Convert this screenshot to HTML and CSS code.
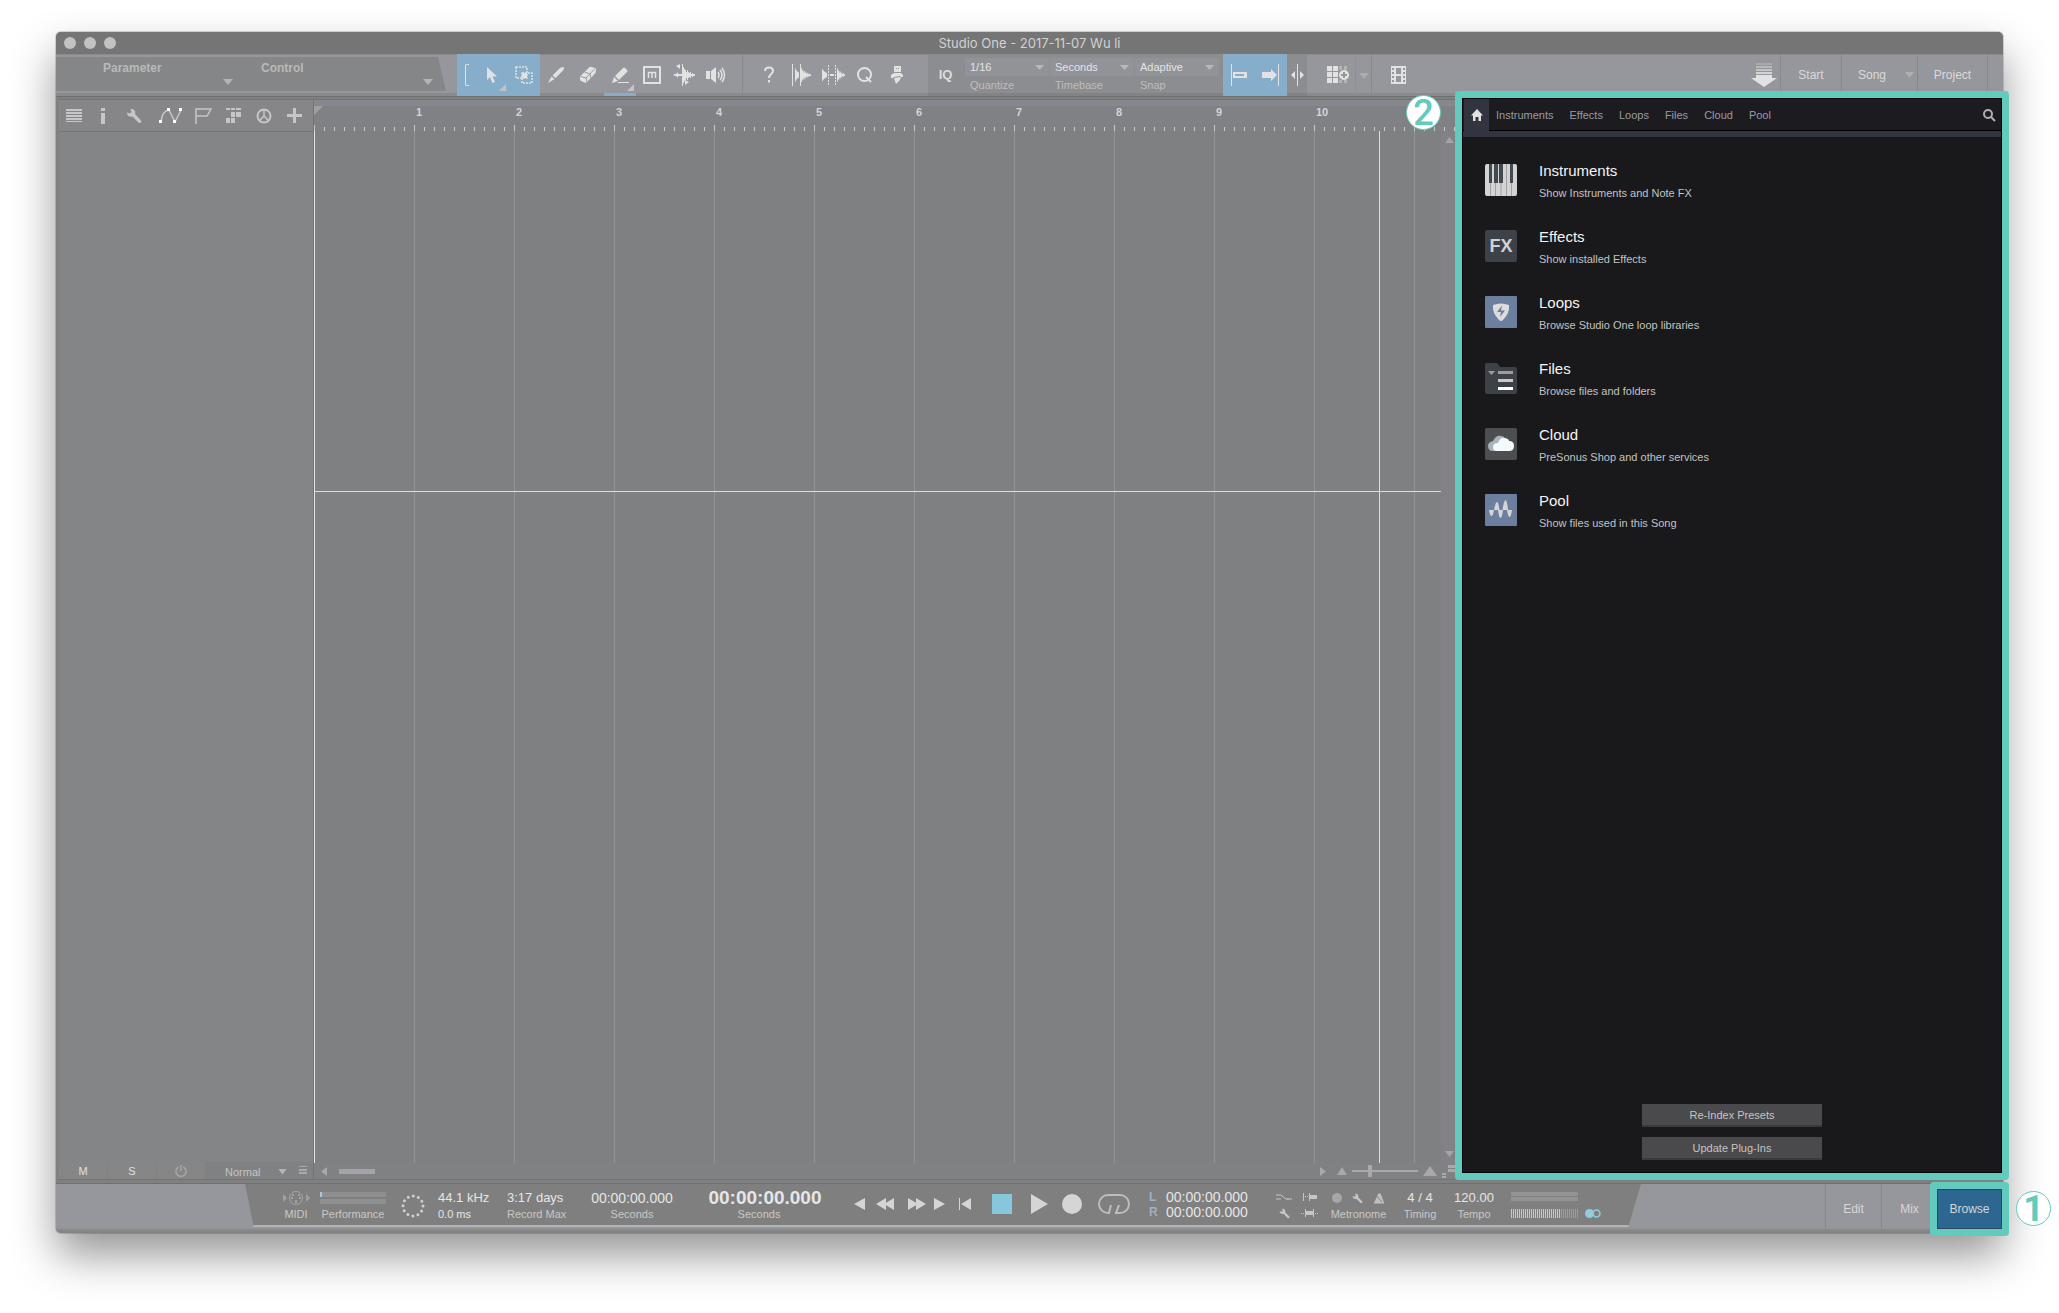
FILE: index.html
```html
<!DOCTYPE html>
<html lang="en">
<head>
<meta charset="utf-8">
<title>Studio One - 2017-11-07 Wu li</title>
<link rel="stylesheet" href="styles.css">
</head>
<body>
<svg class="defs" aria-hidden="true">
  <symbol id="wrench" viewBox="0 0 16 16"><path d="M1 4.500 4 5.500 5.500 4 4.500 1C8 .5 10 3 9 6l6 6.500c1 1.500-1 3.200-2.400 2.200L6.500 8.500C4 9.500.8 8 1 4.500z"/></symbol>
  <symbol id="wave" viewBox="0 0 12 16" preserveAspectRatio="none"><path d="M0 0h1v2h1v1h1v2h1V3h1v2h1v1h1V5h1v2h1V6h1v1h2v2h-2v1H9V9H8v2H7v-1H6v1H5v2H4v-2H3v2H2v1H1v2H0z"/></symbol>
</svg>
<div class="window">
  <header class="titlebar">
    <div class="lights"><i></i><i></i><i></i></div>
    <h1>Studio One - 2017-11-07 Wu li</h1>
  </header>

  <div class="toolbar">
    <div class="mapping">
      <div class="map-cell parameter"><b>Parameter</b><i class="caret"></i></div>
      <div class="map-cell"><b>Control</b><i class="caret"></i></div>
    </div>
    <div class="tools">
      <div class="lit">
        <span class="bracket"></span>
        <button class="tool arrow" aria-label="Arrow"><svg width="12" height="18" viewBox="0 0 12 18"><path d="M1 1v13l3-3 2.500 6 2.500-1-2.500-5.500H11z"/></svg><i class="corner"></i></button>
        <button class="tool" aria-label="Range"><svg class="line" width="18" height="18" viewBox="0 0 18 18"><path d="M1 1h11v11H1zM7 7h10v10H7z" stroke-width="1.500" stroke-dasharray="2 1"/><path d="M7.500 7.500h4v4h-4z" fill="#e2e2e2"/></svg></button>
      </div>
      <button class="tool" aria-label="Split"><svg width="18" height="18" viewBox="0 0 18 18"><path d="M1 17 4.500 10.500 7.500 13zM5.500 9.500 13 2q2-1 4-1 0 2-1 3.500L8.500 12z"/></svg></button>
      <button class="tool" aria-label="Eraser"><svg width="18" height="18" viewBox="0 0 18 18"><path d="M1 10.500 10 1.500q1-1 2.500-.5l3.500 1q1.500.5 1 2l-.5 3L8 16q-1 1-2.500.5L2 15q-1-.5-1-2z"/><path d="m1.500 10.500 5.500 1.500 1 4M7 12l9-9.500M5.500 6l5.500 2 1 4" fill="none" stroke="#98999d"/></svg></button>
      <button class="tool active" aria-label="Paint"><svg width="18" height="18" viewBox="0 0 18 18"><path d="M1 17 3 11l4 4zM4 10 12 2q1-1 2 0l2 2q1 1 0 2l-8 8zM7 16h11v1H7z"/></svg><i class="corner"></i></button>
      <button class="tool" aria-label="Mute"><svg class="line" width="18" height="18" viewBox="0 0 18 18"><path d="M1 1h16v16H1z" stroke-width="2"/><path d="M5.500 12V6.500h7V12M9 6.500V12" stroke-width="1.500"/></svg></button>
      <button class="tool" aria-label="Bend"><svg width="22" height="24" viewBox="0 0 22 24"><path d="M9 1h1v22H9zM0 12q1-1 3-1l2-2v2h4v2H5v2l-2-2q-2 0-3-1zM3 3l4-2v5zM12 22v-5l4 2z"/><use href="#wave" x="10" y="4" width="12" height="16"/></svg></button>
      <button class="tool" aria-label="Listen"><svg width="20" height="18" viewBox="0 0 20 18"><path d="M0 5h4v8H0zM5 5l5-4v16l-5-4z"/><path d="M12 6q2 3 0 6M14 4q4 5 0 10M16 2q5 7 0 14" fill="none" stroke="#e2e2e2" stroke-width="1.500"/></svg></button>
    </div>
    <div class="actions">
      <button class="tool" aria-label="Help"><svg class="line" width="12" height="18" viewBox="0 0 12 18"><path d="M2 5q0-3.500 4-3.500T10 5c0 3-4 3-4 7M6 14v2.500" stroke-width="2"/></svg></button>
      <button class="tool" aria-label="Transient"><svg width="19" height="24" viewBox="0 0 19 24"><path d="M0 1h1v22H0zM8 1h1v22H8zM3 4l1 3 1 1 2 2v4l-2 2-1 1-1 3z"/><use href="#wave" x="9" y="5" width="10" height="14"/></svg></button>
      <button class="tool" aria-label="Audio bend"><svg width="24" height="22" viewBox="0 0 24 22"><path d="M1 4l1 2 2 2 2 1v4l-2 1-2 2-1 2z"/><use href="#wave" x="16" y="4" width="8" height="14"/><path d="M7.500 1v20M14.500 1v20" stroke="#e2e2e2" stroke-dasharray="2 1"/><path d="M9 10h4v2H9z"/></svg></button>
      <button class="tool" aria-label="Quantize"><svg class="line" width="18" height="18" viewBox="0 0 18 18"><circle cx="8.500" cy="8.500" r="6.500" stroke-width="2"/><path d="m10 11 5 5" stroke-width="2"/></svg></button>
      <button class="tool" aria-label="Macro"><svg width="14" height="18" viewBox="0 0 14 18"><path fill-rule="evenodd" d="M4 0h7v6H4zM6 2v1h1V2zm2 0v1h1V2zM4 7h7l2 2v2h-2l-1-1-6 1-1 1H1V9zM4 12l7-1-1 3-4 4z"/></svg></button>
    </div>
    <div class="snap">
      <button class="iq">IQ</button>
      <div class="pick"><select id="quantize" aria-label="Quantize"><option>1/16</option></select><label for="quantize">Quantize</label></div>
      <div class="pick"><select id="timebase" aria-label="Timebase"><option>Seconds</option></select><label for="timebase">Timebase</label></div>
      <div class="pick"><select id="snapmode" aria-label="Snap"><option>Adaptive</option></select><label for="snapmode">Snap</label></div>
      <div class="lit">
        <button class="tool" aria-label="Snap to events"><svg width="18" height="24" viewBox="0 0 18 24"><path fill-rule="evenodd" d="M1 1h1v22H1zM3 9h14v6H3zM5 11v2h9v-2z"/></svg></button>
        <button class="tool" aria-label="Autoscroll"><svg width="18" height="24" viewBox="0 0 18 24"><path d="M16 1h1v22h-1zM0 9h9V6l6 6-6 6v-3H0z"/></svg></button>
      </div>
      <button class="tool slim" aria-label="Cursor snap"><svg width="13" height="24" viewBox="0 0 13 24"><path d="M6 1h1v22H6zM0 12l4-4v8zM13 12 9 8v8z"/></svg></button>
    </div>
    <button class="tool wide" aria-label="Add pattern"><svg width="24" height="18" viewBox="0 0 24 18"><path d="M0 0h5v5H0zM6 0h5v5H6zM0 6h5v5H0zM6 6h5v5H6zM0 12h5v5H0zM6 12h5v5H6z"/><path d="M12 0h3v4h-3zM17 0h3v4h-3zM12 14h3v3h-3zM17 14h3v3h-3z" opacity=".4"/><path fill-rule="evenodd" d="M17 4a5 5 0 1 0 .1 0zm-1 2h2v2h2v2h-2v2h-2v-2h-2V8h2z"/></svg></button>
    <button class="drop" aria-label="Pattern options"><i class="caret"></i></button>
    <button class="tool film" aria-label="Video"><svg width="15" height="18" viewBox="0 0 15 18"><path fill-rule="evenodd" d="M0 0h15v18H0zM1 2v2h2V2zm0 4v2h2V6zm0 4v2h2v-2zm0 4v2h2v-2zM12 2v2h2V2zm0 4v2h2V6zm0 4v2h2v-2zm0 4v2h2v-2zM5 2v6h5V2zm0 8v6h5v-6z"/></svg></button>
    <nav class="pages">
      <span class="download"><svg width="26" height="24" viewBox="0 0 26 24"><path d="M5 12h16v3h5L13 24 0 15h5z"/><path d="M5 9h16v2H5z" opacity=".8"/><path d="M5 6h16v2H5z" opacity=".6"/><path d="M5 3h16v2H5z" opacity=".45"/><path d="M5 0h16v2H5z" opacity=".25"/></svg></span>
      <button>Start</button>
      <button>Song</button>
      <button class="song-drop" aria-label="Songs"><i class="caret"></i></button>
      <button class="project">Project</button>
      <span></span>
    </nav>
  </div>

  <main>
    <section class="tracks">
      <div class="track-tools">
        <button aria-label="Track list"><svg width="16" height="13"><path d="M0 0h16v2H0zM0 3h16v2H0zM0 6h16v2H0zM0 9h16v2H0zM0 12h16v1H0z"/></svg></button>
        <button aria-label="Inspector"><svg width="4" height="16"><path d="M0 0h4v3H0zM0 5h4v11H0z"/></svg></button>
        <button aria-label="Options"><svg width="16" height="16"><use href="#wrench"/></svg></button>
        <button aria-label="Automation"><svg width="24" height="16" viewBox="0 0 24 16"><path d="M2 14Q3 3 10 2l6 12 6-12" fill="none" stroke="#c6c6c6" stroke-width="1.500"/><path d="M0 12h3v3H0zM8 0h3v3H8zM14 12h3v3h-3zM20 0h3v3h-3z" fill="#fff"/></svg></button>
        <button aria-label="Markers"><svg width="18" height="16"><path d="M1 16V1h15l-4 7H1" fill="none" stroke="#c6c6c6" stroke-width="1.500"/></svg></button>
        <button aria-label="Arranger"><svg width="15" height="16"><path d="M0 0h4v2H0zM5 0h4v2H5zM10 0h5v2h-5zM5 4h4v5H5zM10 4h5v5h-5zM0 10h4v5H0zM5 10h4v5H5z"/></svg></button>
        <button aria-label="Tempo track"><svg width="16" height="16"><path d="M8 8V1M8 8l5 5M8 8l-5 5" stroke="#c6c6c6" stroke-width="1.500"/><circle cx="8" cy="8" r="6.500" fill="none" stroke="#c6c6c6" stroke-width="2"/></svg></button>
        <button aria-label="Add track"><svg width="15" height="15"><path d="M6 0h3v6h6v3H9v6H6V9H0V6h6z"/></svg></button>
      </div>
      <div class="track-list"></div>
      <div class="track-foot">
        <button>M</button>
        <button>S</button>
        <button aria-label="Power"><svg width="12" height="12"><path d="M3.500 2a5 5 0 1 0 5 0M6 0v6" stroke="#a8a8a8" stroke-width="1.500" fill="none"/></svg></button>
        <button class="size">Normal <i class="caret"></i></button>
        <button class="rows" aria-label="Rows"><svg width="8" height="9"><path d="M0 0h8v1H0zM0 3h8v2H0zM0 6h8v2H0z"/></svg></button>
      </div>
    </section>

    <section class="arrange">
      <div class="ruler">
        <div class="range"></div>
        <ol><li>1</li><li>2</li><li>3</li><li>4</li><li>5</li><li>6</li><li>7</li><li>8</li><li>9</li><li>10</li></ol>
        <span class="badge two">2</span>
      </div>
      <div class="canvas">
        <div class="lanes">
          <div class="lane"></div>
          <i class="end-marker"></i>
        </div>
        <div class="vscroll"><i class="caret up"></i><i class="caret"></i></div>
      </div>
      <div class="hscroll">
        <svg width="7" height="9"><path d="M6 0v9L0 4.500z"/></svg>
        <i class="thumb"></i>
        <svg class="right" width="7" height="9"><path d="M0 0v9l6-4.500z"/></svg>
        <svg width="10" height="8"><path d="M5 0l5 8H0z"/></svg>
        <svg width="66" height="12"><path d="M0 5h66v2H0zM16 0h4v12h-4z"/></svg>
        <svg width="14" height="10"><path d="M7 0l7 10H0z"/></svg>
        <svg width="13" height="13"><path d="M6 0h7v3H6zM6 4h7v3H6zM0 8h4v2H0zM0 11h4v2H0z"/></svg>
      </div>
    </section>

    <aside class="browser">
      <nav class="tabs">
        <a class="home" href="#home" aria-label="Home"><svg width="12" height="12"><path d="M6 0l6 6.500h-2V12H7.500V8h-3v4H2V6.500H0z"/></svg></a>
        <a href="#instruments">Instruments</a><a href="#effects">Effects</a><a href="#loops">Loops</a><a href="#files">Files</a><a href="#cloud">Cloud</a><a href="#pool">Pool</a>
        <button class="search" aria-label="Search"><svg width="13" height="13"><circle cx="5" cy="5" r="4" fill="none" stroke="#b0b0b0" stroke-width="2"/><path d="m8 8 4 4" stroke="#b0b0b0" stroke-width="2"/></svg></button>
      </nav>
      <ul class="places">
        <li><svg width="32" height="32"><rect width="32" height="32" rx="2" fill="#d3d3d3"/><path d="M5.500 19v13M10.500 19v13M16 19v13M21.500 0v32M26.500 19v13" stroke="#a0a0a0"/><path d="M4 0h3v19H4zM9 0h4v19H9zM14 0h4v19h-4zM25 0h3v19h-3z" fill="#434950"/></svg><div><h2>Instruments</h2><p>Show Instruments and Note FX</p></div></li>
        <li><svg width="32" height="32"><rect width="32" height="32" rx="2" fill="#3c4248"/><text x="16" y="22" text-anchor="middle" class="fx">FX</text></svg><div><h2>Effects</h2><p>Show installed Effects</p></div></li>
        <li><svg width="32" height="32"><rect width="32" height="32" rx="1" fill="#6d7f9e"/><path d="M8 9q8-3 16 0 1 8-6 15-2 2-4 0Q7 17 8 9z" fill="#dcdcdc"/><path d="M17 9.500 12 16h4l-1 5 5-6.500h-4z" fill="#6d7f9e"/></svg><div><h2>Loops</h2><p>Browse Studio One loop libraries</p></div></li>
        <li><svg width="32" height="32"><path d="M0 3q0-2 2-2h9q2 0 4 4h15q2 0 2 2v23q0 2-2 2H2q-2 0-2-2z" fill="#3c4248"/><path d="M3 9h7l-3.500 4zM13 9h15v3H13z" fill="#999da0"/><path d="M13 17h15v3H13z" fill="#c8c8c8"/><path d="M13 25h15v3H13z" fill="#fff"/></svg><div><h2>Files</h2><p>Browse files and folders</p></div></li>
        <li><svg width="32" height="32"><rect width="32" height="32" rx="2" fill="#4d4e50"/><path d="M8 23q-5 0-5-5 0-4 5-5 3-6 8-5 3 0 4 3l-8 12z" fill="#a9b3bb"/><path d="M12 23q-4 0-4-4t5-4q2-6 7-5 4 1 4 3 5 0 5 5t-5 5z" fill="#f4f9fd"/></svg><div><h2>Cloud</h2><p>PreSonus Shop and other services</p></div></li>
        <li><svg width="32" height="32"><rect width="32" height="32" rx="1" fill="#6d7f9e"/><path d="M4 16h5q1.500-8 3-8t2.500 8h3q1.500-10 3-10t2.500 10h4q-1 7-2.500 7T22 16h-4q-1 8-2.500 8T13 16H9q-1 6-2.500 6T4 16z" fill="#d5d5d5"/></svg><div><h2>Pool</h2><p>Show files used in this Song</p></div></li>
      </ul>
      <div class="browser-actions">
        <button>Re-Index Presets</button>
        <button>Update Plug-Ins</button>
      </div>
    </aside>
  </main>

  <footer>
    <div class="transport">
      <div class="cell"><svg class="midi" width="28" height="16" viewBox="0 0 28 16"><path d="M1 4l4 4-4 4zM24 4l4 4-4 4z"/><circle cx="14" cy="8" r="6.500" fill="none" stroke="#a5a5a5"/><path d="M9 7h2v2H9zM17 7h2v2h-2zM10 4h2v2h-2zM16 4h2v2h-2zM13 10h2v3h-2z"/></svg><small>MIDI</small></div>
      <div class="cell"><svg width="66" height="12"><path d="M0 0h66v5H0zM0 7h66v5H0z" fill="#8e8f91"/><path d="M0 0h2v5H0z" fill="#9ccbe0"/></svg><small>Performance</small></div>
      <div class="cell"><svg width="24" height="24"><circle cx="12" cy="12" r="10" fill="none" stroke="#d0d0d0" stroke-width="3" stroke-linecap="round" stroke-dasharray="0 5.236"/></svg></div>
      <div class="cell start"><span>44.1 kHz</span><small class="bright">0.0 ms</small></div>
      <div class="cell start"><span>3:17 days</span><small>Record Max</small></div>
      <div class="cell"><span class="time">00:00:00.000</span><small>Seconds</small></div>
      <div class="cell main-time"><strong>00:00:00.000</strong><small>Seconds</small></div>
      <button aria-label="Previous"><svg width="11" height="12"><path d="M11 0v12L0 6z"/></svg></button>
      <button aria-label="Rewind"><svg width="18" height="12"><path d="M10 0v12L0 6zM18 0v12L8 6z"/></svg></button>
      <button aria-label="Forward"><svg width="18" height="12"><path d="M0 0v12l10-6zM8 0v12l10-6z"/></svg></button>
      <button aria-label="Next"><svg width="11" height="12"><path d="M0 0v12l11-6z"/></svg></button>
      <button aria-label="Return to zero"><svg width="12" height="12"><path d="M0 0h1v12H0zM12 0v12L2 6z"/></svg></button>
      <button aria-label="Stop"><svg width="20" height="20"><path d="M0 0h20v20H0z" fill="#87c7dd"/></svg></button>
      <button aria-label="Play"><svg width="17" height="20"><path d="M0 0v20l17-10z"/></svg></button>
      <button aria-label="Record"><svg width="20" height="20"><circle cx="10" cy="10" r="10"/></svg></button>
      <button aria-label="Loop"><svg width="32" height="20"><path d="M13 11 11 19H10A9 9 0 0 1 10 1H22a9 9 0 0 1 0 18h-4L21 11" fill="none" stroke="#bdbdbd" stroke-width="2"/></svg></button>
      <div class="locators"><b>L</b><span>00:00:00.000</span><b>R</b><span>00:00:00.000</span></div>
      <div class="modes">
        <svg width="16" height="6"><path d="M0 1h5l5 4h6M0 5h5M11 5h2" fill="none" stroke="#c6c6c6" stroke-width="1"/></svg>
        <svg width="14" height="8"><path d="M0 0h1v8H0zM2 3h1v1H2zM4 3h1v1H4zM6 0h1v2h7v4H7v2H6z"/></svg>
        <svg width="11" height="11"><use href="#wrench"/></svg>
        <svg width="18" height="8"><path d="M0 4h1v1H0zM2 4h1v1H2zM4 0h1v2h7V0h1v8h-1V6H5v2H4zM14 4h1v1h-1zM16 4h1v1h-1z"/></svg>
      </div>
      <div class="cell"><div class="metro"><svg width="10" height="10"><circle cx="5" cy="5" r="5" fill="#a4a8aa"/></svg><svg width="11" height="11"><use href="#wrench"/></svg><svg width="12" height="11"><path d="M5 0h3l4 11H0zM1 0l8 9" fill="#c0c0c0" stroke="#808080"/></svg></div><small>Metronome</small></div>
      <div class="cell"><span>4 / 4</span><small>Timing</small></div>
      <div class="cell"><span>120.00</span><small>Tempo</small></div>
      <div class="levels">
        <svg width="67" height="9"><path d="M0 0h67v4H0zM0 5h67v4H0z" fill="#929395"/></svg>
        <div><i class="meter"></i><svg width="16" height="9"><circle cx="4.500" cy="4.500" r="4.500" fill="#93cbe0"/><circle cx="11.500" cy="4.500" r="3.500" fill="none" stroke="#93cbe0" stroke-width="1.500"/></svg></div>
      </div>
    </div>
    <div class="views">
      <button>Edit</button>
      <button>Mix</button>
      <button class="browse">Browse<span class="badge one">1</span></button>
    </div>
  </footer>
</div>
</body>
</html>
```
FILE: styles.css
```css
* { box-sizing: border-box; }
body {
  margin: 0;
  padding: 32px 56px 80px;
  min-height: 100vh;
  background: #fff;
  font: 11px/14px "Liberation Sans", Arial, sans-serif;
  color: #d6d6d6;
  display: flex;
  overflow-x: hidden;
}
button, select {
  font: inherit;
  color: inherit;
  background: none;
  border: 0;
  border-radius: 0;
  padding: 0;
  margin: 0;
}
h1, h2, p, ul, ol { margin: 0; padding: 0; list-style: none; font-weight: normal; }
a { color: inherit; text-decoration: none; }
svg { display: block; flex: none; fill: #e2e2e2; }
.line { fill: none; stroke: #e2e2e2; }
.defs { position: absolute; width: 0; height: 0; }

.window {
  flex: 1;
  min-width: 1600px;
  display: flex;
  flex-direction: column;
  background: #868686;
  border-radius: 5px;
  box-shadow: 0 0 0 1px rgba(0, 0, 0, .15), 0 22px 44px rgba(0, 0, 0, .42);
}
.titlebar {
  height: 22px;
  display: grid;
  grid-template-columns: 1fr auto 1fr;
  align-items: center;
  background: #757575;
  border-radius: 5px 5px 0 0;
}
.titlebar h1 { font: 13px/22px Inter, "Liberation Sans", sans-serif; color: #d2d2d2; }
.lights { display: flex; gap: 8px; padding-left: 8px; }
.lights i { width: 12px; height: 12px; border-radius: 50%; background: #c2c2c4; }

.caret {
  display: block;
  width: 10px;
  height: 6px;
  background: #b4b4b6;
  clip-path: polygon(0 0, 100% 0, 50% 100%);
}
.caret.up { clip-path: polygon(50% 0, 100% 100%, 0 100%); }

.toolbar {
  height: 42px;
  display: flex;
  background: #96979c;
  box-shadow: inset 0 1px #8b8b8e, inset 0 -3px #8a8a8c;
}
.mapping {
  width: 390px;
  height: 34px;
  margin: 3px 11px 0 0;
  display: grid;
  grid-template-columns: 190px 200px;
  background: #858688;
  clip-path: polygon(0 0, 382px 0, 390px 100%, 0 100%);
}
.map-cell { display: flex; flex-direction: column; justify-content: space-between; padding: 4px 13px 6px 15px; }
.map-cell.parameter { padding-left: 47px; }
.map-cell b { font-size: 12px; color: #b9b9ba; }
.map-cell .caret { align-self: flex-end; }
.tools, .actions, .snap, .lit { display: flex; }
.tools { padding-right: 10px; border-right: 1px solid #88898d; }
.actions { padding: 0 15px 0 10px; }
.lit { background: #86adca; }
.bracket { width: 4px; height: 22px; margin: 10px 7px 0 8px; border: 1px solid #e2e2e2; border-right: 0; border-radius: 2px 0 0 2px; }
.tool { width: 32px; display: flex; align-items: center; justify-content: center; position: relative; padding-bottom: 1px; }
.tool.slim { width: 20px; }
.tool.wide { width: 48px; padding-left: 16px; }
.tool.film { width: 54px; border-left: 1px solid #88898d; }
.tool.active { box-shadow: inset 0 -3px #86adca; }
.corner { position: absolute; right: 2px; bottom: 5px; width: 7px; height: 7px; background: #c4c4c6; clip-path: polygon(100% 0, 100% 100%, 0 100%); }
.snap { background: #8c8d90; box-shadow: inset 0 -3px #838385; }
.iq { width: 37px; padding: 0 2px 0 0; font-weight: bold; font-size: 13px; color: #dcdcdc; }
.pick { width: 85px; padding: 4px 1px 0 0; position: relative; color: #bdbdbf; }
.pick select { appearance: none; display: block; width: 100%; height: 18px; padding-left: 5px; background: #929398; color: #e4e4e4; }
.pick label { display: block; padding: 2px 5px 0; }
.pick::after { content: ""; position: absolute; right: 6px; top: 11px; width: 9px; height: 5px; background: #b8b8ba; clip-path: polygon(0 0, 100% 0, 50% 100%); }
.snap .lit { margin-left: 3px; }
.drop { width: 16px; padding: 2px 3px 0; border-left: 1px solid #8e8f94; }
.drop .caret { background: #acacaf; }
.pages { margin-left: auto; display: grid; grid-template-columns: 32px 61px 61px 15px 70px 16px; height: 41px; font-size: 12px; color: #dadadb; }
.pages > * { display: flex; align-items: center; justify-content: center; border-left: 1px solid #88898d; }
.pages .download { border: 0; }
.pages .song-drop { border: 0; }
.pages .caret { background: #b0b0b2; }

main { flex: 1; display: flex; padding: 3px 1px 4px 3px; background: #808080; box-shadow: inset 0 1px #6f6f6f, inset 0 -1px #707070; }
.tracks { width: 255px; display: flex; flex-direction: column; border: solid #737373; border-width: 1px 1px 1px 0; }
.track-tools { height: 31px; display: grid; grid-template-columns: 30px 28px 34px 40px 26px 32px 30px 30px; background: #868688; }
.track-tools button { display: flex; align-items: center; justify-content: center; }
.track-tools svg, .modes svg { fill: #c6c6c6; }
.track-list { flex: 1; background: #848587; border-top: 1px solid #747474; }
.track-foot { height: 17px; display: grid; grid-template-columns: 48px 48px 48px 84px 1fr; gap: 1px; background: #808183; color: #e0e0e0; }
.track-foot button { display: flex; align-items: center; justify-content: center; background: #868686; }
.track-foot .size { background: none; justify-content: space-between; padding: 2px 3px 0 19px; color: #c4c4c4; }
.track-foot .rows { background: none; justify-content: flex-start; padding-left: 8px; }
.track-foot svg, .hscroll svg { fill: #a9a9ac; }
.track-foot .caret { width: 9px; }

.arrange { flex: 1; min-width: 0; display: flex; flex-direction: column; }
.ruler {
  height: 32px;
  position: relative;
  border-top: 1px solid #737373;
  background:
    repeating-linear-gradient(90deg, #c9c9c9 0 1px, transparent 1px 100px) 0 100% / 100% 6px no-repeat,
    repeating-linear-gradient(90deg, #c9c9c9 0 1px, transparent 1px 10px) 0 100% / 100% 4px no-repeat,
    #808185;
}
.range { height: 6px; background: #87888e; }
.range::after { content: ""; display: block; position: relative; top: 6px; width: 9px; height: 9px; background: #a0a0a4; clip-path: polygon(0 0, 100% 0, 0 100%); }
.ruler ol { display: flex; padding-left: 102px; font-weight: bold; color: #d4d4d4; }
.ruler li { flex: 0 0 100px; line-height: 12px; }
.canvas { flex: 1; display: flex; background: #7f8082; }
.lanes { flex: 1; position: relative; border-left: 1px solid #e4e4e4; background: repeating-linear-gradient(90deg, transparent 0 99px, #929399 99px 100px); }
.lane { height: 35%; border-bottom: 1px solid #dcdcdc; }
.end-marker { position: absolute; left: 1064px; top: 0; bottom: 0; width: 1px; background: #dcdcdc; }
.vscroll { width: 14px; padding: 6px 0 6px 4px; display: flex; flex-direction: column; justify-content: space-between; background: #828284; }
.vscroll .caret { width: 9px; background: #a4a4a7; }
.hscroll { height: 17px; display: flex; align-items: center; padding-left: 7px; gap: 5px; background: #808183; border-bottom: 1px solid #737373; }
.thumb { width: 36px; height: 5px; margin-left: 6px; background: #a3a3a8; }
.hscroll .right { margin: 0 5px 0 auto; }

.browser {
  width: 540px;
  margin: -1px 0 7px 7px;
  border: 1px solid #060608;
  position: relative;
  display: flex;
  flex-direction: column;
  background: #19191b;
}
.browser::after, .browse::after {
  content: "";
  position: absolute;
  inset: -8px;
  border: 7px solid #62cbbd;
  border-radius: 4px;
  pointer-events: none;
}
.tabs { height: 38px; display: flex; align-items: center; padding-left: 1px; background: #1c1c20; border-bottom: 6px solid #323440; color: #9a9ba2; box-shadow: inset 0 -1px #000; }
.tabs a { margin-right: 16px; }
.tabs .home { align-self: stretch; width: 25px; margin-right: 7px; display: flex; align-items: center; justify-content: center; background: #323440; }
.search { margin: 0 5px 0 auto; }
.places { flex: 1; padding: 27px 22px; display: flex; flex-direction: column; gap: 34px; }
.places li { display: flex; gap: 22px; }
.places h2 { font-size: 15px; line-height: 14px; color: #f4f4f4; }
.places p { padding-top: 8px; line-height: 14px; color: #c2c2c3; }
.places li > div { height: 32px; }
.fx { font: bold 18px "Liberation Sans", sans-serif; fill: #d2d2d2; }
.browser-actions { display: flex; flex-direction: column; align-items: center; gap: 10px; padding-bottom: 12px; }
.browser-actions button { width: 180px; height: 23px; background: #4a4a4c; border-bottom: 2px solid #39393b; color: #c4c4c4; }

footer { height: 49px; display: flex; background: linear-gradient(#96979c 0 44px, #88888a 46px, #828282); border-radius: 0 0 5px 5px; }
.transport {
  flex: none;
  height: 44px;
  margin-left: 189px;
  padding-left: 29px;
  display: grid;
  grid-template-columns: 44px 70px 50px 69px 78px 94px 172px 16px 36px 28px 16px 36px 38px 36px 30px 54px 130px 52px 71px 52px 56px 139px;
  background: linear-gradient(#7f7f7f 0 41px, #b4b4b6 41px 43px, #96979c 43px);
  clip-path: polygon(0 0, 100% 0, calc(100% - 13px) 100%, 9px 100%);
}
.transport > button { display: flex; align-items: center; justify-content: center; padding-bottom: 4px; }
.transport > button svg { fill: #d5d5d5; }
.transport .midi { fill: #a2a2a2; }
.cell { display: grid; grid-template-rows: 16px 14px; justify-items: center; align-items: center; align-content: start; row-gap: 1px; padding-top: 6px; font-size: 13px; color: #e6e6e6; white-space: nowrap; }
.cell.start { justify-items: start; }
.cell small { font-size: 11px; color: #c8c8c8; }
.cell small.bright { color: #e6e6e6; }
.cell > svg:only-child { grid-row: 1 / 3; }
.time { font-size: 14px; }
.main-time strong { font-size: 19px; line-height: 18px; }
.main-time small { padding-right: 12px; }
.locators { display: grid; grid-template-columns: 17px auto; align-content: start; padding: 6px 0 0 8px; font-size: 14px; line-height: 15px; color: #e6e6e6; }
.locators b { font-size: 12px; color: #9fb0be; }
.modes { display: grid; grid-template: 16px 16px / 26px 26px; place-items: center; align-content: start; padding-top: 5px; }
.metro { display: flex; gap: 10px; align-items: center; }
.metro svg { fill: #c6c6c6; }
.levels { display: flex; flex-direction: column; gap: 8px; padding: 8px 0 0 9px; }
.levels div { display: flex; align-items: center; gap: 7px; }
.meter { width: 67px; height: 9px; background: repeating-linear-gradient(90deg, transparent 0 1px, #7f7f7f 1px 2px), linear-gradient(90deg, #a9d3e4 50px, #9c9c9c 50px); }
.views { margin-left: auto; display: grid; grid-template-columns: 56px 56px 66px; font-size: 12px; color: #d6d6d7; }
.views button { border-left: 1px solid #88898d; }
.views .browse { position: relative; height: 40px; margin: 5px 1px 0 0; background: #2d6791; border: 1px solid #2a4860; }
.badge { position: absolute; z-index: 2; width: 35px; height: 35px; border: 1px solid #62cbbd; border-radius: 50%; text-align: center; color: #62cbbd; font: 500 36px/34px Roboto, "Liberation Sans", sans-serif; background: #fff; }
.badge.two { right: 14px; top: -5px; }
.badge.one { left: 78px; top: 1px; font-weight: bold; }
```
